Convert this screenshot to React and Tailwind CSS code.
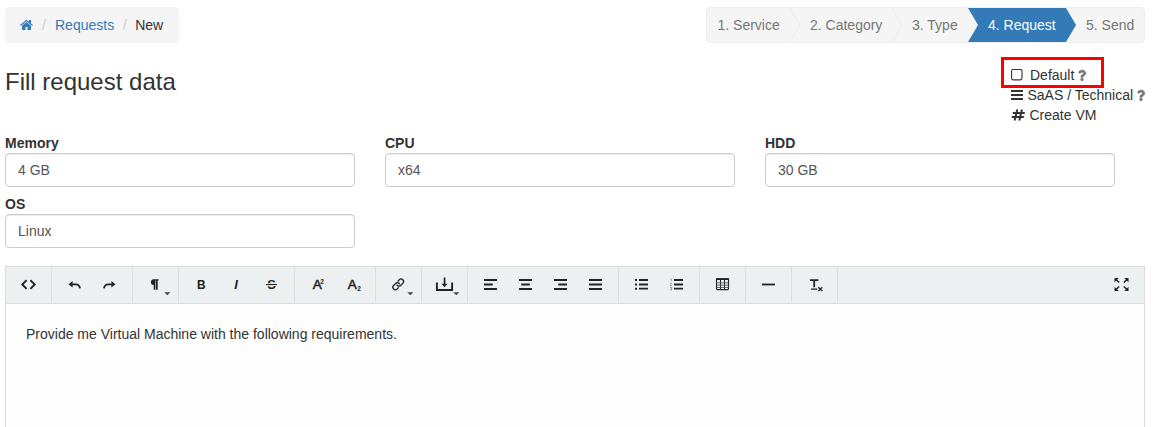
import React from "react";
import { FaQuestion } from "react-icons/fa";

function Home() {
  return (
    <svg className="h-[14px] w-[13px]" viewBox="0 0 1664 1792" fill="currentColor">
      <path d="M1408 992v480q0 26-19 45t-45 19h-384v-384h-256v384h-384q-26 0-45-19t-19-45v-480q0-1 .5-3t.5-3l575-474 575 474q1 2 1 6zm223-69l-62 74q-8 9-21 11h-3q-13 0-21-7l-692-577-692 577q-12 8-24 7-13-2-21-11l-62-74q-8-10-7-23.5t11-21.5l719-599q32-26 76-26t76 26l244 204v-195q0-14 9-23t23-9h192q14 0 23 9t9 23v408l219 182q10 8 11 21.5t-7 23.5z" />
    </svg>
  );
}

function Chevron({ left, right, line }) {
  return (
    <svg className="h-[34px] w-[10px] shrink-0" viewBox="0 0 10 34">
      <rect width="10" height="34" fill={right} />
      <path d="M0 0L10 17L0 34z" fill={left} />
      {line && <path d="M0 0L10 17L0 34" fill="none" stroke="#ededed" strokeWidth="1" />}
    </svg>
  );
}

function Field({ label, value }) {
  return (
    <label className="block w-[350px]">
      <span className="block h-5 font-bold leading-5">{label}</span>
      <input
        className="block h-[34px] w-full rounded-[4px] border border-[#ccc] bg-white px-3 text-[14px] text-[#555] shadow-[inset_0_1px_1px_rgba(0,0,0,0.075)] outline-none"
        defaultValue={value}
      />
    </label>
  );
}

function Help() {
  return (
    <FaQuestion
      className="ml-1 h-[11px] w-2 overflow-visible text-[#777]"
      preserveAspectRatio="none"
      stroke="currentColor"
      strokeWidth="20"
    />
  );
}

function Tool({ children, menu }) {
  return (
    <button className="block h-[35px] w-[35px]">
      <svg className="h-[35px] w-[35px]" viewBox="0 0 35 35" fill="#222" fontFamily="Liberation Sans, sans-serif">
        {children}
        {menu && <path d="M26.3 25.3h6l-3 3z" fill="#444" />}
      </svg>
    </button>
  );
}

function Group({ children }) {
  return <div className="flex h-[35px] border-r border-[#d7e0e2] px-[5px]">{children}</div>;
}

const stroke = { fill: "none", stroke: "#222" };

function Toolbar() {
  return (
    <div className="flex h-[37px] items-start border-b border-[#d7e0e2] bg-[#ecf0f1]">
      <Group>
        <Tool>
          <path d="M15.6 13.2L11.3 17.5L15.6 21.8M19.4 13.2L23.7 17.5L19.4 21.8" {...stroke} strokeWidth="1.9" />
        </Tool>
      </Group>
      <Group>
        <Tool>
          <path d="M11.5 17.3L15.6 14v6.6z" />
          <path d="M14 17.3h4.5q4 0 4.5 4" {...stroke} strokeWidth="1.8" />
        </Tool>
        <Tool>
          <path d="M23.5 17.3L19.4 14v6.6z" />
          <path d="M21 17.3h-4.5q-4 0-4.5 4" {...stroke} strokeWidth="1.8" />
        </Tool>
      </Group>
      <Group>
        <Tool menu>
          <path d="M20.6 12.2v1.4h-.9v9.1H18v-9.1h-.6v9.1h-1.7v-4.6a2.9 2.9 0 0 1 .3-5.9z" />
        </Tool>
      </Group>
      <Group>
        <Tool>
          <text x="13" y="22" fontSize="13" fontWeight="bold" textLength="8.6" lengthAdjust="spacingAndGlyphs">B</text>
        </Tool>
        <Tool>
          <text x="15.2" y="22" fontSize="13" fontWeight="bold" fontStyle="italic">I</text>
        </Tool>
        <Tool>
          <text x="13.2" y="22.2" fontSize="13.5" fontWeight="bold" textLength="8.6" lengthAdjust="spacingAndGlyphs">S</text>
          <path d="M11.5 16.2h12v2.8h-12z" fill="#ecf0f1" />
          <path d="M12 17h11v1.1H12z" />
        </Tool>
      </Group>
      <Group>
        <Tool>
          <text x="12.8" y="22" fontSize="13" textLength="9" lengthAdjust="spacingAndGlyphs" stroke="#222" strokeWidth=".5">A</text>
          <text x="20.2" y="17" fontSize="6.5" fontWeight="bold">2</text>
        </Tool>
        <Tool>
          <text x="12.8" y="22" fontSize="13" textLength="9" lengthAdjust="spacingAndGlyphs" stroke="#222" strokeWidth=".5">A</text>
          <text x="22.3" y="24" fontSize="6.5" fontWeight="bold">2</text>
        </Tool>
      </Group>
      <Group>
        <Tool menu>
          <g transform="rotate(-45 17.2 17.4)" {...stroke} strokeWidth="1.3">
            <path d="M15.5 19.9h-2.3a2.5 2.5 0 0 1 0-5h2.8a2.5 2.5 0 0 1 2.4 3.4" />
            <path d="M18.9 14.9h2.3a2.5 2.5 0 0 1 0 5h-2.8a2.5 2.5 0 0 1-2.4-3.4" />
          </g>
        </Tool>
      </Group>
      <Group>
        <Tool menu>
          <path d="M9.9 15.5v7.5h15.2v-7.5" {...stroke} strokeWidth="1.9" />
          <path d="M16.7 10.5h1.7v6.3h2.1l-3 3.5l-3-3.5h2.2z" />
        </Tool>
      </Group>
      <Group>
        <Tool><path d="M11 12h13v1.9H11zM11 16.6h8.7v1.8H11zM11 21h13v1.9H11z" /></Tool>
        <Tool><path d="M11 12h13v1.9H11zM13.2 16.6h8.6v1.8h-8.6zM11 21h13v1.9H11z" /></Tool>
        <Tool><path d="M11 12h13v1.9H11zM15.3 16.6H24v1.8h-8.7zM11 21h13v1.9H11z" /></Tool>
        <Tool><path d="M11 12h13v1.9H11zM11 16.6h13v1.8H11zM11 21h13v1.9H11z" /></Tool>
      </Group>
      <Group>
        <Tool>
          <path d="M11 12h2v2h-2zM11 16.5h2v2h-2zM11 20.7h2v2h-2zM15 12h9v1.9h-9zM15 16.6h9v1.8h-9zM15 20.7h9v1.9h-9z" />
        </Tool>
        <Tool>
          <path d="M15 12h9v1.9h-9zM15 16.6h9v1.8h-9zM15 20.7h9v1.9h-9z" />
          <path d="M11.2 11.9h1.1v2.4M11 16.2h1.6l-1.4 2.3h1.6M11 20.5h1.6v2.5H11M11.5 21.8h1.1" fill="none" stroke="#888" strokeWidth=".7" />
        </Tool>
      </Group>
      <Group>
        <Tool>
          <rect x="11.5" y="11.8" width="12" height="10.8" rx=".8" {...stroke} strokeWidth="1.1" />
          <path d="M11 11.3h13v1.7H11zM15 12.5h1v10h-1zM19 12.5h1v10h-1z" />
          <path d="M11.5 15.8h12M11.5 18.2h12M11.5 20.5h12" fill="none" stroke="#555" strokeWidth=".9" />
        </Tool>
      </Group>
      <Group>
        <Tool><path d="M11 16.6h13v1.8H11z" /></Tool>
      </Group>
      <Group>
        <Tool>
          <path d="M13 12.2h8.4v1.7h-3.3v6.3h-1.8v-6.3H13zM14 21.6h6.3v1.2H14z" />
          <path d="M21.3 20.2l4 3.7M25.3 20.2l-4 3.7" {...stroke} strokeWidth="1.3" />
        </Tool>
      </Group>
      <div className="ml-auto pr-[5px]">
        <Tool>
          <path d="M10.5 11h4.2l-4.2 4.2zM24.5 11v4.2L20.3 11zM10.5 24v-4.2l4.2 4.2zM24.5 24h-4.2l4.2-4.2z" />
          <path d="M12 12.5l3.2 3M23 12.5l-3.2 3M12 22.5l3.2-3M23 22.5l-3.2-3" {...stroke} strokeWidth="1.5" />
        </Tool>
      </div>
    </div>
  );
}

export default function App() {
  return (
    <div className="flex h-[427px] w-[1157px] flex-col overflow-hidden bg-white pl-[5px] pr-3 pt-[7px] font-['Liberation_Sans',Arial,sans-serif] text-[14px] leading-5 text-[#333]">
      <header className="flex h-9 shrink-0 justify-between">
        <nav className="flex w-[174px] items-center rounded-[4px] bg-[#f5f5f5] pl-[15px]">
          <a className="text-[#337ab7]"><Home /></a>
          <span className="w-[22px] text-center text-[#ccc]">/</span>
          <a className="text-[#337ab7]">Requests</a>
          <span className="w-[21px] text-center text-[#ccc]">/</span>
          <span>New</span>
        </nav>
        <nav className="flex w-[439px] items-center overflow-hidden rounded-[4px] border border-[#eee] bg-[#f5f5f5] leading-[34px] text-[#777]">
          <span className="w-[83px] shrink-0 whitespace-nowrap pl-[10.5px]">1. Service</span>
          <Chevron left="#f5f5f5" right="#f5f5f5" line />
          <span className="w-[92px] shrink-0 whitespace-nowrap pl-[10px]">2. Category</span>
          <Chevron left="#f5f5f5" right="#f5f5f5" line />
          <span className="w-[66px] shrink-0 whitespace-nowrap pl-[10px]">3. Type</span>
          <Chevron left="#f5f5f5" right="#337ab7" />
          <span className="w-[88px] shrink-0 whitespace-nowrap bg-[#337ab7] pl-[10px] text-white">4. Request</span>
          <Chevron left="#337ab7" right="#f5f5f5" />
          <span className="w-[68px] shrink-0 whitespace-nowrap pl-[10px]">5. Send</span>
        </nav>
      </header>

      <div className="flex h-[90px] shrink-0 justify-between pt-[22px]">
        <h1 className="h-[34px] text-[24px] leading-[34px]">Fill request data</h1>
        <div className="relative w-[134px] whitespace-nowrap">
          <div className="absolute -left-[10px] -top-2 h-[31px] w-[103px] border-[3px] border-[#ff0000]" />
          <div className="flex h-5 items-center">
            <svg className="mr-[7px] h-3 w-3" viewBox="0 0 12 12">
              <rect x=".6" y=".5" width="10.4" height="10.4" rx="1.6" fill="none" stroke="#333" strokeWidth="1.1" />
            </svg>
            Default
            <Help />
          </div>
          <div className="flex h-5 items-center">
            <svg className="mr-[4.5px] h-3 w-3 shrink-0" viewBox="0 0 12 12" fill="#333">
              <path d="M0 1h12v2H0zM0 5h12v2H0zM0 9h12v2H0z" />
            </svg>
            SaAS / Technical
            <Help />
          </div>
          <div className="flex h-5 items-center">
            <svg className="mr-[4.5px] h-[14px] w-[14px]" viewBox="0 0 14 14" fill="none" stroke="#333" strokeWidth="2">
              <path d="M6.3 1.5L3.6 12.5M11 1.5L8.3 12.5M1.8 4.9h12M.8 9.1h12" />
            </svg>
            Create VM
          </div>
        </div>
      </div>

      <div className="grid shrink-0 grid-cols-[350px_350px_350px] gap-x-[30px] gap-y-[7px]">
        <Field label="Memory" value="4 GB" />
        <Field label="CPU" value="x64" />
        <Field label="HDD" value="30 GB" />
        <Field label="OS" value="Linux" />
      </div>

      <section className="mt-[18px] grow border border-b-0 border-[#d9dcdd] bg-[#fefefe]">
        <Toolbar />
        <p className="px-5 pt-5">Provide me Virtual Machine with the following requirements.</p>
      </section>
    </div>
  );
}
